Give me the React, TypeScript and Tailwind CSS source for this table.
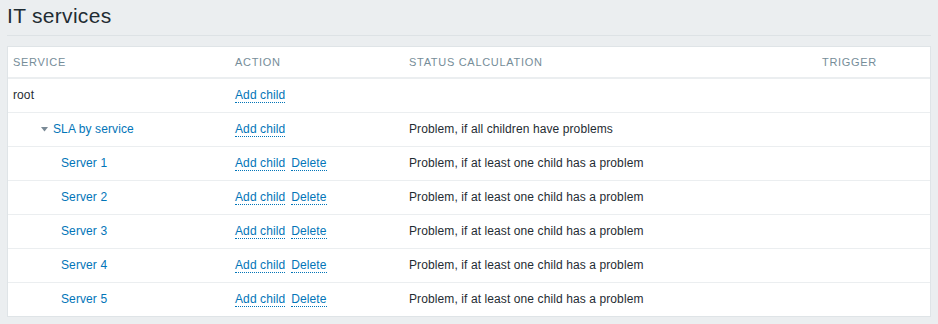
import React from "react";

type Row = {
  name: string;
  level: 0 | 1 | 2;
  canDelete?: boolean;
  status?: string;
};

const rows: Row[] = [
  { name: "root", level: 0 },
  { name: "SLA by service", level: 1, status: "Problem, if all children have problems" },
  { name: "Server 1", level: 2, canDelete: true, status: "Problem, if at least one child has a problem" },
  { name: "Server 2", level: 2, canDelete: true, status: "Problem, if at least one child has a problem" },
  { name: "Server 3", level: 2, canDelete: true, status: "Problem, if at least one child has a problem" },
  { name: "Server 4", level: 2, canDelete: true, status: "Problem, if at least one child has a problem" },
  { name: "Server 5", level: 2, canDelete: true, status: "Problem, if at least one child has a problem" },
];

function ActionLink({ children }: { children: React.ReactNode }) {
  return (
    <a
      href="#"
      className="text-[#0275b8] border-b border-dotted border-[#0275b8] leading-[14px] no-underline"
    >
      {children}
    </a>
  );
}

function ServiceCell({ row }: { row: Row }) {
  if (row.level === 0) {
    return <span className="text-[#1f2c33]">{row.name}</span>;
  }
  if (row.level === 1) {
    return (
      <span className="flex items-center pl-[28px]">
        <svg width="7" height="5" viewBox="0 0 7 5" className="mr-[5px] mt-[1px]">
          <path d="M0 0 L7 0 L3.5 4.5 Z" fill="#7a8a96" />
        </svg>
        <a href="#" className="text-[#0275b8]">{row.name}</a>
      </span>
    );
  }
  return (
    <span className="pl-[48px] block">
      <a href="#" className="text-[#0275b8]">{row.name}</a>
    </span>
  );
}

const th = "text-left font-normal uppercase text-[#768d99] px-[5px] tracking-[0.7px] text-[11px]";

export default function App() {
  return (
    <div
      className="min-h-[324px] w-[938px] bg-[#ebeef0] text-[12px] tracking-[0.1px] text-[#1f2c33]"
      style={{ fontFamily: '"Liberation Sans", Arial, sans-serif' }}
    >
      <div className="px-[7px] pt-[1px]">
        <div className="border-b border-[#dde2e5] h-[35px] pt-[2px]">
          <h1 className="text-[21px] leading-[26px] font-normal text-[#1f2c33] tracking-[0.3px]">
            IT services
          </h1>
        </div>
        <div className="mt-[10px] bg-white border border-[#dfe4e7]">
          <table className="w-full border-collapse table-fixed">
            <colgroup>
              <col className="w-[222px]" />
              <col className="w-[174px]" />
              <col className="w-[413px]" />
              <col />
            </colgroup>
            <thead>
              <tr className="h-[31px] border-b-2 border-[#ebeef0]">
                <th className={th}>Service</th>
                <th className={th}>Action</th>
                <th className={th}>Status calculation</th>
                <th className={th}>Trigger</th>
              </tr>
            </thead>
            <tbody>
              {rows.map((row, i) => (
                <tr
                  key={row.name}
                  className={`h-[34px] ${i < rows.length - 1 ? "border-b border-[#ebeef0]" : ""}`}
                >
                  <td className="px-[5px] align-middle">
                    <ServiceCell row={row} />
                  </td>
                  <td className="px-[5px] align-middle">
                    <span className="flex gap-[6px]">
                      <ActionLink>Add child</ActionLink>
                      {row.canDelete && <ActionLink>Delete</ActionLink>}
                    </span>
                  </td>
                  <td className="px-[5px] align-middle">{row.status ?? ""}</td>
                  <td className="px-[5px] align-middle"></td>
                </tr>
              ))}
            </tbody>
          </table>
        </div>
      </div>
    </div>
  );
}
